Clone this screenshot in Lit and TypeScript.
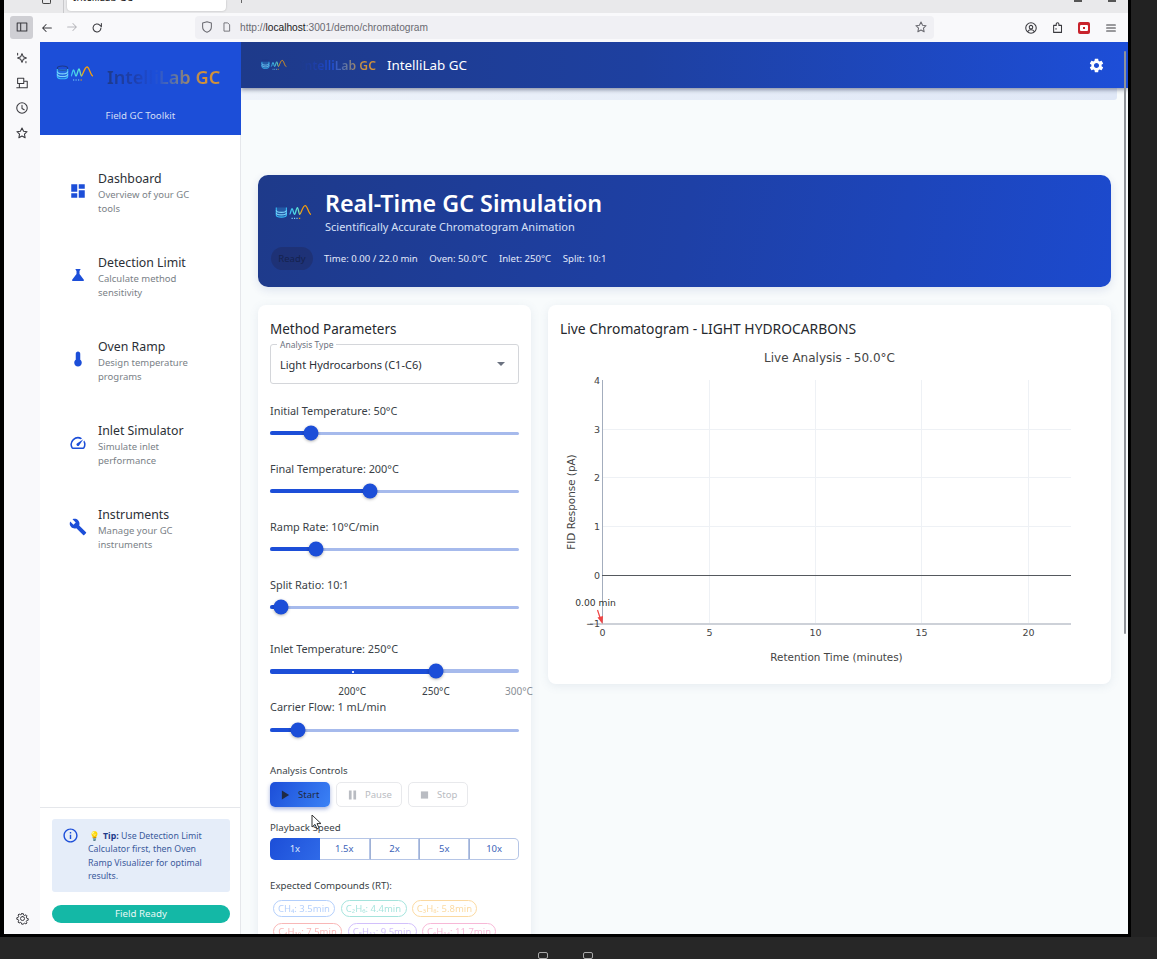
import { LitElement, html, css, svg } from 'lit';
import { customElement } from 'lit/decorators.js';

const navItems = [
  { title: 'Dashboard', desc: 'Overview of your GC tools', icon: 'M3 13h8V3H3v10zm0 8h8v-6H3v6zm10 0h8V11h-8v10zm0-18v6h8V3h-8z' },
  { title: 'Detection Limit', desc: 'Calculate method sensitivity', icon: 'M19.8 18.4 14 10.67V6.5l1.35-1.69c.26-.33.03-.81-.39-.81H9.04c-.42 0-.65.48-.39.81L10 6.5v4.17L4.2 18.4c-.49.66-.02 1.6.8 1.6h14c.82 0 1.29-.94.8-1.6z' },
  { title: 'Oven Ramp', desc: 'Design temperature programs', icon: 'M15 13V5c0-1.66-1.34-3-3-3S9 3.34 9 5v8c-1.21.91-2 2.37-2 4 0 2.76 2.24 5 5 5s5-2.24 5-5c0-1.63-.79-3.09-2-4z' },
  { title: 'Inlet Simulator', desc: 'Simulate inlet performance', icon: 'M20.38 8.57l-1.23 1.85a8 8 0 0 1-.22 7.58H5.07A8 8 0 0 1 15.58 6.85l1.85-1.23A10 10 0 0 0 3.35 19a2 2 0 0 0 1.72 1h13.85a2 2 0 0 0 1.74-1 10 10 0 0 0-.27-10.44zm-9.79 6.84a2 2 0 0 0 2.83 0l5.66-8.49-8.49 5.66a2 2 0 0 0 0 2.83z' },
  { title: 'Instruments', desc: 'Manage your GC instruments', icon: 'M22.7 19l-9.1-9.1c.9-2.3.4-5-1.5-6.9-2-2-5-2.4-7.4-1.3L9 6 6 9 1.6 4.7C.4 7.1.9 10.1 2.9 12.1c1.9 1.9 4.6 2.4 6.9 1.5l9.1 9.1c.4.4 1 .4 1.4 0l2.3-2.3c.5-.4.5-1.1.1-1.4z' },
];

const GEAR = 'M19.14 12.94c.04-.3.06-.61.06-.94 0-.32-.02-.64-.07-.94l2.03-1.58c.18-.14.23-.41.12-.61l-1.92-3.32c-.12-.22-.37-.29-.59-.22l-2.39.96c-.5-.38-1.03-.7-1.62-.94l-.36-2.54c-.04-.24-.24-.41-.48-.41h-3.84c-.24 0-.43.17-.47.41l-.36 2.54c-.59.24-1.13.57-1.62.94l-2.39-.96c-.22-.08-.47 0-.59.22L2.74 8.87c-.12.21-.08.47.12.61l2.03 1.58c-.05.3-.09.63-.09.94s.02.64.07.94l-2.03 1.58c-.18.14-.23.41-.12.61l1.92 3.32c.12.22.37.29.59.22l2.39-.96c.5.38 1.03.7 1.62.94l.36 2.54c.05.24.24.41.48.41h3.84c.24 0 .44-.17.47-.41l.36-2.54c.59-.24 1.13-.56 1.62-.94l2.39.96c.22.08.47 0 .59-.22l1.92-3.32c.12-.22.07-.47-.12-.61l-2.01-1.58zM12 15.6c-1.98 0-3.6-1.62-3.6-3.6s1.62-3.6 3.6-3.6 3.6 1.62 3.6 3.6-1.62 3.6-3.6 3.6z';
const INFO = 'M11 7h2v2h-2zm0 4h2v6h-2zm1-9C6.48 2 2 6.48 2 12s4.48 10 10 10 10-4.48 10-10S17.52 2 12 2zm0 18c-4.41 0-8-3.59-8-8s3.59-8 8-8 8 3.59 8 8-3.59 8-8 8z';

const sliders = [
  { label: 'Initial Temperature: 50°C', pct: 16.5 },
  { label: 'Final Temperature: 200°C', pct: 40 },
  { label: 'Ramp Rate: 10°C/min', pct: 18.5 },
  { label: 'Split Ratio: 10:1', pct: 4.5, gap: true },
];

const inletMarks = [
  { label: '200°C', pct: 33, faded: false },
  { label: '250°C', pct: 66.6, faded: false },
  { label: '300°C', pct: 100, faded: true },
];

const speeds = ['1x', '1.5x', '2x', '5x', '10x'];

const compounds = [
  { text: 'CH₄: 3.5min', color: '#3b82f6', w: 62 },
  { text: 'C₂H₆: 4.4min', color: '#14b8a6', w: 66 },
  { text: 'C₃H₈: 5.8min', color: '#f59e0b', w: 65 },
  { text: 'C₄H₁₀: 7.5min', color: '#ef4444', w: 69 },
  { text: 'C₅H₁₂: 9.5min', color: '#8b5cf6', w: 69 },
  { text: 'C₆H₁₄: 11.7min', color: '#ec4899', w: 74 },
];

// chart uses page coordinates, see viewBox
const xTicks = [
  { v: '0', x: 602.5 }, { v: '5', x: 709.5 }, { v: '10', x: 815.5 }, { v: '15', x: 921.5 }, { v: '20', x: 1028.5 },
];
const yTicks = [
  { v: '4', y: 380.5 }, { v: '3', y: 429.5 }, { v: '2', y: 477.5 }, { v: '1', y: 526.5 }, { v: '0', y: 575.5 }, { v: '−1', y: 624 },
];

function logo(width: number, height: number, id: string) {
  return html`<svg class="logo" width=${width} height=${height} viewBox="0 0 38 16" fill="none">
    <defs>
      <linearGradient id=${id} x1="0" y1="0" x2="1" y2="0">
        <stop offset="0" stop-color="#38bdf8" />
        <stop offset=".4" stop-color="#5eead4" />
        <stop offset=".55" stop-color="#f59e0b" />
        <stop offset="1" stop-color="#f59e0b" />
      </linearGradient>
    </defs>
    <ellipse cx="6.5" cy="3.2" rx="5.2" ry="2.2" stroke="#1e3a8a" stroke-width="1.1" />
    <path d="M1.3 4v7.5c0 1.3 2.3 2.3 5.2 2.3s5.2-1 5.2-2.3V4" fill="#38bdf8" fill-opacity=".25" stroke="#38bdf8" stroke-width="1.1" />
    <path d="M1.3 6.6c0 1.3 2.3 2.3 5.2 2.3s5.2-1 5.2-2.3M1.3 9.2c0 1.3 2.3 2.3 5.2 2.3s5.2-1 5.2-2.3" stroke="#7dd3fc" stroke-width="1.1" />
    <path d="M15 11C16 11 16.5 5 17.5 5S19 11 20 11 22 4 23 4 24.5 11 25.5 11 28.5 2 31 2 34.5 11 37 11" stroke="url(#${id})" stroke-width="1.3" />
    <path d="M17 15h1.2M19.5 15h1.2M22 15h1.2" stroke="#7dd3fc" stroke-width="1.2" />
    <path d="M24.5 15h1.4" stroke="#f59e0b" stroke-width="1.2" />
  </svg>`;
}

function stroke(d: string, size = 14, view = 16) {
  return html`<svg class="ff-icon" width=${size} height=${size} viewBox="0 0 ${view} ${view}" fill="none" stroke="currentColor" stroke-width="1.2" stroke-linecap="round" stroke-linejoin="round"><path d=${d} /></svg>`;
}

@customElement('app-root')
export class AppRoot extends LitElement {
  static styles = css`
    :host {
      display: block;
      width: 1157px;
      height: 959px;
      overflow: hidden;
      background: #222;
      font-family: 'Noto Sans', 'Open Sans', sans-serif;
      color: #1f2937;
    }
    * { box-sizing: border-box; }
    .Window {
      width: 1131px;
      height: 937px;
      background: #000;
      padding: 0 3px 3px 4px;
      display: flex;
      flex-direction: column;
    }
    .Taskbar {
      height: 22px;
      background: #272727;
      display: flex;
      gap: 35px;
      padding: 15px 0 0 538px;
      color: #a9a9a9;
    }
    .Taskbar span {
      width: 10px;
      height: 7px;
      border: 1px solid currentColor;
      border-radius: 2px;
    }

    /* browser chrome */
    .Tabs {
      height: 13px;
      background: #e9e9eb;
      display: flex;
      align-items: flex-start;
      overflow: hidden;
      flex: none;
    }
    .TabGlyph {
      width: 9px;
      height: 4px;
      margin: 0 0 0 38px;
      border: 1px solid #444;
      border-top: none;
      border-radius: 0 0 2px 2px;
    }
    .TabSep {
      width: 1px;
      height: 13px;
      margin-left: 12px;
      background: #c9c9cc;
    }
    .Tab {
      width: 159px;
      height: 11px;
      margin-left: 3px;
      background: #fff;
      border-radius: 0 0 4px 4px;
      box-shadow: 0 0 2px rgba(0, 0, 0, .25);
      padding-left: 6px;
      font-size: 10px;
      line-height: 10px;
      overflow: hidden;
      color: #222;
    }
    .Tab span { display: block; margin-top: -8px; }
    .TabPlus {
      width: 1px;
      height: 3px;
      margin-left: 15px;
      background: #666;
    }
    .TabRight {
      margin-left: auto;
      display: flex;
      gap: 26px;
      padding-right: 12px;
    }
    .TabRight span {
      width: 8px;
      height: 2px;
      background: #555;
    }
    .Toolbar {
      height: 29px;
      background: #f9f9fb;
      display: flex;
      align-items: center;
      flex: none;
      color: #3a3a3f;
      padding: 0 0 0 6px;
    }
    .SideBtn {
      width: 23px;
      height: 23px;
      border-radius: 3px;
      background: #cfcfd4;
      display: flex;
      align-items: center;
      justify-content: center;
      margin-top: -1px;
    }
    .Nav {
      display: flex;
      align-items: center;
      gap: 11px;
      margin-left: 7px;
      width: 155px;
    }
    .Nav .off { color: #b8b8bd; }
    .Url {
      width: 739px;
      height: 23px;
      margin-top: -1px;
      background: #f0f0f4;
      border-radius: 4px;
      display: flex;
      align-items: center;
      padding: 0 6px 0 5px;
      gap: 7px;
      font-family: 'Liberation Sans', sans-serif;
      font-size: 10.2px;
      color: #6b6b72;
    }
    .Url b { font-weight: 400; color: #222; }
    .Url .ff-icon:last-child { margin-left: auto; }
    .Ext {
      display: flex;
      align-items: center;
      gap: 13px;
      margin-left: 90px;
    }
    .Ext .ff-icon:last-child { margin-left: 1px; }
    .RedExt {
      width: 12px;
      height: 12px;
      background: #c8232c;
      border-radius: 2px;
      display: flex;
      align-items: center;
      justify-content: center;
    }
    .RedExt i {
      width: 8px;
      height: 6px;
      background: #fff;
      border-radius: 1px;
      display: flex;
      align-items: center;
      justify-content: center;
    }
    .RedExt i::after {
      content: '';
      width: 2px;
      height: 2px;
      background: #c8232c;
    }

    .Body {
      flex: 1;
      min-height: 0;
      display: flex;
    }
    .Rail {
      width: 36px;
      background: #f9f9fb;
      display: flex;
      flex-direction: column;
      align-items: center;
      padding: 9px 0 9px;
      gap: 11px;
      color: #3a3a3f;
      flex: none;
    }
    .Rail .spacer { flex: 1; }

    /* drawer */
    .Drawer {
      width: 201px;
      flex: none;
      background: #fff;
      border-right: 1px solid #e5e7eb;
      display: flex;
      flex-direction: column;
    }
    .DrawerHead {
      height: 93px;
      flex: none;
      margin-right: -1px;
      background: #1c4ed8;
      padding-top: 20px;
    }
    .DrawerBrand {
      display: flex;
      align-items: center;
      padding-left: 16px;
      height: 30px;
    }
    .DrawerBrand .logo { margin-bottom: 9px; }
    .DrawerBrand .Grad {
      margin-left: 13px;
      font-size: 18.2px;
      font-weight: 600;
    }
    .Grad {
      background: linear-gradient(90deg, #1e3a8a 0%, #1e40af 25%, #1d4ed8 42%, #6b7a99 62%, #d0913a 85%);
      -webkit-background-clip: text;
      background-clip: text;
      color: transparent;
      white-space: nowrap;
    }
    .Toolkit {
      margin-top: 16px;
      text-align: center;
      font-size: 9.7px;
      line-height: 16px;
      color: #d3ddf6;
    }
    .Menu {
      flex: 1;
      padding-top: 35px;
    }
    .Item {
      display: flex;
      align-items: center;
      height: 46px;
      margin-bottom: 38px;
      padding-left: 29px;
    }
    .Item svg {
      width: 18px;
      height: 18px;
      fill: #1c4ed8;
      margin: 0 11px 4px 0;
      flex: none;
    }
    .ItemTitle {
      font-size: 12.3px;
      line-height: 17px;
      margin-bottom: 1px;
      color: #2b2f36;
    }
    .ItemDesc {
      font-size: 9.5px;
      line-height: 14px;
      color: #7a7f87;
      width: 100px;
    }
    .DrawerFoot {
      flex: none;
      height: 127px;
      border-top: 1px solid #e5e7eb;
      padding: 11px 10px 0 12px;
    }
    .Tip {
      height: 73px;
      background: #e5edf9;
      border-radius: 3px;
      display: flex;
      padding: 11px 23px 0 10px;
      font-size: 8.8px;
      line-height: 13.4px;
      color: #3a5a9b;
    }
    .Tip svg {
      width: 17px;
      height: 17px;
      fill: #1c4ed8;
      flex: none;
      margin: -3px 9px 0 0;
    }
    .Tip b { color: #1e3a8a; font-weight: 700; }
    .Bulb { margin: 0 3px 0 1px; }
    .Ready {
      margin-top: 13px;
      height: 18px;
      border-radius: 9px;
      background: #14b8a6;
      color: #e7f9f6;
      text-align: center;
      font-size: 9.7px;
      line-height: 18px;
    }

    /* app area */
    .App {
      flex: 1;
      min-width: 0;
      position: relative;
      background: #f8fbfc;
      overflow: hidden;
    }
    .Bar {
      height: 46px;
      background: linear-gradient(90deg, #1e3a8a, #1e40a0 45%, #1d4ed8);
      box-shadow: 0 2px 4px rgba(30, 40, 70, .45);
      display: flex;
      align-items: center;
      padding: 0 23px 0 20px;
      position: relative;
      z-index: 1;
    }
    .Bar .logo { margin-bottom: 2px; }
    .Bar .Grad {
      margin-left: 13px;
      font-size: 12.2px;
      font-weight: 600;
    }
    .BarTitle {
      margin-left: 11px;
      font-size: 13.4px;
      color: #fff;
      flex: 1;
    }
    .Bar > svg:last-child {
      width: 17px;
      height: 17px;
      fill: #fff;
    }
    .Band {
      height: 12px;
      margin-right: 11px;
      background: linear-gradient(90deg, #eef3fa, #dfe7f6);
      border-radius: 0 0 3px 0;
    }
    .Scroll {
      position: absolute;
      top: 9px;
      right: 2px;
      width: 2px;
      height: 583px;
      background: #8f9399;
      border-radius: 1px;
      z-index: 2;
    }
    .Main {
      padding: 75px 17px 0;
    }
    .Hero {
      height: 112px;
      border-radius: 10px;
      background: linear-gradient(100deg, #1e3a8a, #1e40a6 50%, #1c4ace);
      box-shadow: 0 3px 10px rgba(30, 58, 138, .12);
      padding: 12px 13px 0;
      color: #fff;
    }
    .HeroTop {
      display: flex;
      align-items: center;
      padding-left: 4px;
    }
    .HeroTop .logo { margin-right: 13px; }
    .HeroTitle {
      font-size: 23.3px;
      font-weight: 600;
      line-height: 32px;
    }
    .HeroSub {
      font-size: 11px;
      line-height: 16px;
      color: #d6e0f7;
    }
    .Status {
      display: flex;
      align-items: center;
      gap: 11.6px;
      margin-top: 12px;
      font-size: 9.6px;
      color: #e3eafa;
    }
    .Chip {
      width: 42px;
      height: 23px;
      margin-right: -.6px;
      border-radius: 12px;
      background: rgba(30, 41, 90, .45);
      color: #15224f;
      font-size: 9.5px;
      line-height: 23px;
      text-align: center;
    }
    .Columns {
      display: grid;
      grid-template-columns: 273px 563px;
      gap: 17px;
      margin-top: 18px;
      align-items: start;
    }
    .Card {
      background: #fff;
      border-radius: 8px;
      box-shadow: 0 2px 10px rgba(100, 120, 160, .12);
    }
    .Params {
      padding: 14px 12px 0;
      height: 700px;
    }
    .CardTitle {
      font-size: 13.5px;
      line-height: 20px;
      color: #25282d;
    }
    .Select {
      position: relative;
      height: 40px;
      margin: 5px 0 19px;
      border: 1px solid #d4d6da;
      border-radius: 3px;
      padding: 0 9px;
      display: flex;
      align-items: center;
      justify-content: space-between;
      font-size: 11px;
      color: #2b2f36;
    }
    .Legend {
      position: absolute;
      top: -6px;
      left: 6px;
      padding: 0 3px;
      background: #fff;
      font-size: 8.5px;
      line-height: 11px;
      color: #6b7280;
    }
    .Caret {
      width: 0;
      height: 0;
      border: 4px solid transparent;
      border-top: 4.5px solid #6b7280;
      border-bottom: none;
      margin-right: 4px;
    }
    .SliderLabel {
      font-size: 10.9px;
      line-height: 16px;
      color: #3a3f47;
    }
    .Slider {
      margin-bottom: 14px;
    }
    .Slider.wide { margin-bottom: 20px; }
    .SliderArea {
      position: relative;
      height: 28px;
      display: flex;
      align-items: center;
    }
    .Rail3 {
      position: relative;
      width: 100%;
      height: 3px;
      border-radius: 2px;
      background: #a6baec;
    }
    .Rail3.thick { height: 4px; }
    .Fill {
      position: absolute;
      left: 0;
      top: -.5px;
      height: 4px;
      border-radius: 2px;
      background: #1c4ed8;
    }
    .Rail3.thick .Fill { height: 5px; }
    .Thumb {
      position: absolute;
      top: 50%;
      width: 15px;
      height: 15px;
      border-radius: 50%;
      background: #1c4ed8;
      box-shadow: 0 1px 3px rgba(0, 0, 0, .3);
      transform: translate(-50%, -50%);
    }
    .Tick {
      position: absolute;
      left: 33%;
      top: 1.5px;
      width: 2px;
      height: 2px;
      background: #dbe5ff;
    }
    .Inlet {
      position: relative;
      height: 58px;
    }
    .MarkLabel {
      position: absolute;
      top: 43px;
      transform: translateX(-50%);
      font-size: 10px;
      line-height: 14px;
      color: #3a3f47;
    }
    .MarkLabel.faded { color: #8a8f96; }
    .Carrier .SliderArea { margin-top: 1px; }
    .Carrier { margin-bottom: 19px; }
    .Small {
      font-size: 9.7px;
      line-height: 16px;
      color: #3a3f47;
    }
    .Buttons {
      display: flex;
      gap: 6px;
      margin: 3px 0 13px;
    }
    .Btn {
      height: 25px;
      border: 1px solid #e8e9ec;
      border-radius: 5px;
      display: flex;
      align-items: center;
      font-size: 9.5px;
      color: #b9bcc2;
    }
    .Btn svg { width: 9px; height: 10px; fill: currentColor; margin-right: 8px; }
    .Btn.primary {
      border: none;
      background: linear-gradient(120deg, #1c4ed8, #3b82f6);
      box-shadow: 0 2px 4px rgba(30, 64, 175, .4);
      color: #1f2a44;
    }
    .Speeds {
      display: flex;
      height: 22px;
      margin: 2px 0 18px;
    }
    .Speeds span {
      flex: none;
      width: 20%;
      text-align: center;
      font-size: 9.5px;
      line-height: 20px;
      color: #3d63b8;
      border: 1px solid #b5c5e6;
      border-left: none;
    }
    .Speeds span:last-child { border-radius: 0 5px 5px 0; }
    .Speeds span:nth-child(n + 3) { border-left: 1px solid #9fb1d6; }
    .Speeds span.on {
      border: none;
      border-radius: 5px 0 0 5px;
      background: linear-gradient(120deg, #1c4ed8, #2f6ae8);
      color: #dfe8fb;
      line-height: 22px;
    }
    .Compounds {
      display: flex;
      flex-wrap: wrap;
      gap: 6px 5.5px;
      margin-top: 6px;
      padding-left: 3px;
    }
    .Compound {
      height: 17px;
      border: 1px solid;
      border-radius: 9px;
      font-size: 9.5px;
      line-height: 15px;
      text-align: center;
      opacity: .38;
      white-space: nowrap;
    }
    .ChartCard {
      height: 379px;
      padding-top: 14px;
    }
    .ChartCard .CardTitle { padding: 0 12px; font-size: 13.85px; }
    .ChartCard svg {
      display: block;
      margin-top: 6px;
      font-family: 'DejaVu Sans', sans-serif;
    }
    .Cursor {
      position: absolute;
      left: 311px;
      top: 814px;
      z-index: 3;
    }
  `;

  renderSlider(s: { label: string; pct: number; gap?: boolean }) {
    return html`<div class="Slider ${s.gap ? 'wide' : ''}">
      <div class="SliderLabel">${s.label}</div>
      ${this.renderTrack(s.pct)}
    </div>`;
  }

  renderTrack(pct: number, thick = false) {
    return html`<div class="SliderArea">
      <div class="Rail3 ${thick ? 'thick' : ''}">
        <div class="Fill" style="width:${pct}%"></div>
        ${thick ? html`<div class="Tick"></div>` : ''}
        <div class="Thumb" style="left:${pct}%"></div>
      </div>
    </div>`;
  }

  renderChart() {
    return html`<svg width="563" height="330" viewBox="548 345 563 330">
      ${xTicks.slice(1).map((t) => svg`<line x1=${t.x} x2=${t.x} y1="380" y2="623" stroke="#eef1f5" />`)}
      ${yTicks.slice(1, 4).map((t) => svg`<line x1="602" x2="1071" y1=${t.y} y2=${t.y} stroke="#eef1f5" />`)}
      <line x1="602.5" x2="602.5" y1="380" y2="624" stroke="#a3adbd" />
      <line x1="602" x2="1071" y1="575.5" y2="575.5" stroke="#55595e" />
      <line x1="590" x2="1071" y1="624" y2="624" stroke="#cdd1d8" stroke-width="2" />
      ${xTicks.map((t) => svg`<text x=${t.x} y="635.5" font-size="9.5" fill="#444" text-anchor="middle">${t.v}</text>`)}
      ${yTicks.map((t) => svg`<text x="600" y=${t.y + 3} font-size="9.5" fill="#444" text-anchor="end">${t.v}</text>`)}
      <text x="829.5" y="362" font-size="12" fill="#444" text-anchor="middle">Live Analysis - 50.0°C</text>
      <text x="836.5" y="661" font-size="10.4" fill="#444" text-anchor="middle">Retention Time (minutes)</text>
      <text transform="translate(575 502) rotate(-90)" font-size="10.4" fill="#444" text-anchor="middle">FID Response (pA)</text>
      <text x="595.5" y="606" font-size="9.2" fill="#333" text-anchor="middle">0.00 min</text>
      <line x1="597.5" y1="610" x2="600.5" y2="619" stroke="#ef4444" stroke-width="1.2" />
      <path d="M602.5 624 L597.5 617.5 L603 616 Z" fill="#ef4444" />
    </svg>`;
  }

  render() {
    return html`
      <div class="Window">
        <div class="Tabs">
          <div class="TabGlyph"></div>
          <div class="TabSep"></div>
          <div class="Tab"><span>IntelliLab GC</span></div>
          <div class="TabPlus"></div>
          <div class="TabRight"><span></span><span></span></div>
        </div>
        <div class="Toolbar">
          <div class="SideBtn">${stroke('M2.5 3.5h11v9h-11z M2.5 3.5h4v9h-4z', 14)}</div>
          <div class="Nav">
            ${stroke('M13 8H3M7 4 3 8l4 4', 14)}
            <span class="off">${stroke('M3 8h10M9 4l4 4-4 4', 14)}</span>
            ${stroke('M12.5 8a4.5 4.5 0 1 1-1.4-3.3L13 6.5V2.8', 14)}
          </div>
          <div class="Url">
            ${stroke('M8 2 13 3.5V8c0 3-2.2 5-5 6-2.8-1-5-3-5-6V3.5z', 14)}
            ${stroke('M4.5 2.5h4.5l2.5 2.5v8.5h-7z', 12)}
            <span>http://<b>localhost</b>:3001/demo/chromatogram</span>
            ${stroke('M8 2.2l1.8 3.8 4 .5-3 2.8.8 4.2L8 11.4l-3.6 2.1.8-4.2-3-2.8 4-.5z', 14)}
          </div>
          <div class="Ext">
            ${stroke('M8 2a6 6 0 1 0 0 12A6 6 0 0 0 8 2zM8 5a2 2 0 1 0 0 4 2 2 0 0 0 0-4zM4.5 12c.6-1.5 2-2 3.5-2s2.9.5 3.5 2', 14)}
            ${stroke('M3 5h3V3.5a1.5 1.5 0 0 1 3 0V5h3v8H3zM6 9h-.5', 14)}
            <div class="RedExt"><i></i></div>
            ${stroke('M3 4.5h10M3 8h10M3 11.5h10', 14)}
          </div>
        </div>
        <div class="Body">
          <div class="Rail">
            ${stroke('M8 3l1.5 3.5L13 8l-3.5 1.5L8 13l-1.5-3.5L3 8l3.5-1.5zM3 2.5v2M12.5 12v1.5', 14)}
            ${stroke('M3 2.5h7v6H3zM2 13.5h12M5 8.5v5M11 6h3v7.5', 14)}
            ${stroke('M8 2a6 6 0 1 0 0 12A6 6 0 0 0 8 2zM8 5v3.5l2.5 1.5', 14)}
            ${stroke('M8 2.2l1.8 3.8 4 .5-3 2.8.8 4.2L8 11.4l-3.6 2.1.8-4.2-3-2.8 4-.5z', 14)}
            <div class="spacer"></div>
            ${stroke('M8 5.5a2.5 2.5 0 1 0 0 5 2.5 2.5 0 0 0 0-5zM7 2h2l.3 1.7 1.5.7 1.5-1 1.3 1.4-1 1.4.7 1.6 1.7.3v2l-1.7.3-.7 1.5 1 1.5-1.4 1.3-1.4-1-1.6.7L9 15H7l-.3-1.6-1.5-.7-1.5 1-1.3-1.4 1-1.4-.7-1.6L1 9V7l1.7-.3.7-1.5-1-1.5 1.4-1.3 1.4 1 1.5-.7z', 13)}
          </div>
          <div class="Drawer">
            <div class="DrawerHead">
              <div class="DrawerBrand">
                ${logo(38, 16, 'lg1')}
                <span class="Grad">IntelliLab GC</span>
              </div>
              <div class="Toolkit">Field GC Toolkit</div>
            </div>
            <div class="Menu">
              ${navItems.map(
                (n) => html`<div class="Item">
                  <svg viewBox="0 0 24 24"><path d=${n.icon} /></svg>
                  <div>
                    <div class="ItemTitle">${n.title}</div>
                    <div class="ItemDesc">${n.desc}</div>
                  </div>
                </div>`,
              )}
            </div>
            <div class="DrawerFoot">
              <div class="Tip">
                <svg viewBox="0 0 24 24"><path d=${INFO} /></svg>
                <div><span class="Bulb">💡</span><b>Tip:</b> Use Detection Limit Calculator first, then Oven Ramp Visualizer for optimal results.</div>
              </div>
              <div class="Ready">Field Ready</div>
            </div>
          </div>
          <div class="App">
            <div class="Bar">
              ${logo(26, 11, 'lg2')}
              <span class="Grad">IntelliLab GC</span>
              <span class="BarTitle">IntelliLab GC</span>
              <svg viewBox="0 0 24 24"><path d=${GEAR} /></svg>
            </div>
            <div class="Scroll"></div>
            <div class="Band"></div>
            <div class="Main">
              <div class="Hero">
                <div class="HeroTop">
                  ${logo(37, 17, 'lg3')}
                  <div>
                    <div class="HeroTitle">Real-Time GC Simulation</div>
                    <div class="HeroSub">Scientifically Accurate Chromatogram Animation</div>
                  </div>
                </div>
                <div class="Status">
                  <span class="Chip">Ready</span>
                  <span>Time: 0.00 / 22.0 min</span>
                  <span>Oven: 50.0°C</span>
                  <span>Inlet: 250°C</span>
                  <span>Split: 10:1</span>
                </div>
              </div>
              <div class="Columns">
                <div class="Card Params">
                  <div class="CardTitle">Method Parameters</div>
                  <div class="Select">
                    <span class="Legend">Analysis Type</span>
                    <span>Light Hydrocarbons (C1-C6)</span>
                    <span class="Caret"></span>
                  </div>
                  ${sliders.map((s) => this.renderSlider(s))}
                  <div class="Inlet">
                    <div class="SliderLabel">Inlet Temperature: 250°C</div>
                    ${this.renderTrack(66.6, true)}
                    ${inletMarks.map(
                      (m) => html`<span class="MarkLabel ${m.faded ? 'faded' : ''}" style="left:${m.pct}%">${m.label}</span>`,
                    )}
                  </div>
                  <div class="Carrier">
                    <div class="SliderLabel">Carrier Flow: 1 mL/min</div>
                    ${this.renderTrack(11.2)}
                  </div>
                  <div class="Small">Analysis Controls</div>
                  <div class="Buttons">
                    <div class="Btn primary" style="width:60px;padding-left:11px">
                      <svg viewBox="0 0 10 10"><path d="M1 0l8 5-8 5z" /></svg>Start
                    </div>
                    <div class="Btn" style="width:66px;padding-left:11px">
                      <svg viewBox="0 0 10 10"><path d="M1 0h3v10H1zM6 0h3v10H6z" /></svg>Pause
                    </div>
                    <div class="Btn" style="width:60px;padding-left:11px">
                      <svg viewBox="0 0 10 10"><path d="M1 1h8v8H1z" /></svg>Stop
                    </div>
                  </div>
                  <div class="Small">Playback Speed</div>
                  <div class="Speeds">
                    ${speeds.map((s, i) => html`<span class=${i === 0 ? 'on' : ''}>${s}</span>`)}
                  </div>
                  <div class="Small">Expected Compounds (RT):</div>
                  <div class="Compounds">
                    ${compounds.map(
                      (c) => html`<span class="Compound" style="width:${c.w}px;color:${c.color};border-color:${c.color}">${c.text}</span>`,
                    )}
                  </div>
                </div>
                <div class="Card ChartCard">
                  <div class="CardTitle">Live Chromatogram - LIGHT HYDROCARBONS</div>
                  ${this.renderChart()}
                </div>
              </div>
            </div>
          </div>
        </div>
      </div>
      <div class="Taskbar"><span></span><span></span></div>
      <svg class="Cursor" width="11" height="16" viewBox="0 0 11 16">
        <path d="M1 1v12l3-2.6 2 4.4 2-.9-2-4.3h4z" fill="#fff" stroke="#333" stroke-width="1" />
      </svg>
    `;
  }
}
